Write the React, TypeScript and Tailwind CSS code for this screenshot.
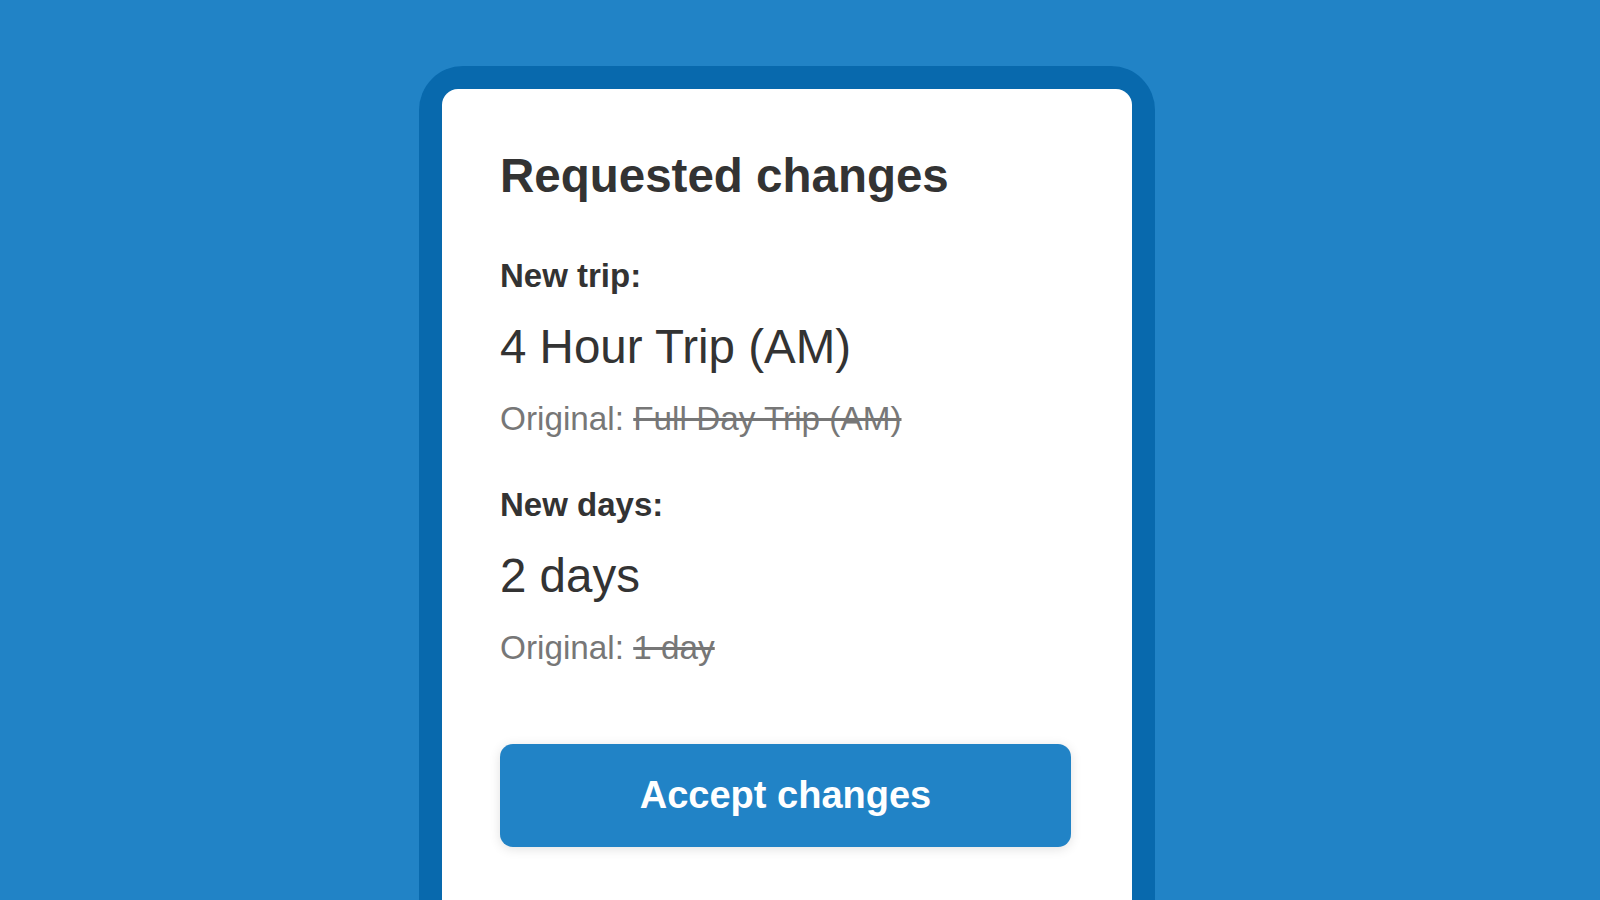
export default function App() {
  return (
    <div
      className="h-screen w-full overflow-hidden bg-[#2183c6] pl-[419px] pt-[66px]"
      style={{ fontFamily: '"Liberation Sans", Arial, sans-serif' }}
    >
      {/* Device frame */}
      <div className="w-[736px] rounded-t-[44px] bg-[#0869ad] px-[23px] pt-[23px]">
        <div className="rounded-t-[16px] bg-white pl-[58px] pr-[61px] pt-[59px] pb-[200px] text-[#333333]">
          <h1 className="text-[47.5px] font-bold leading-[56px]">Requested changes</h1>

          <p className="mt-[52px] text-[33px] font-bold leading-[40px]">New trip:</p>
          <p className="mt-[23px] text-[47.5px] leading-[56px]">4 Hour Trip (AM)</p>
          <p className="mt-[24px] text-[33.3px] leading-[40px] text-[#777777]">
            Original: <span className="line-through">Full Day Trip (AM)</span>
          </p>

          <p className="mt-[46px] text-[33px] font-bold leading-[40px]">New days:</p>
          <p className="mt-[23px] text-[47.5px] leading-[56px]">2 days</p>
          <p className="mt-[24px] text-[33.3px] leading-[40px] text-[#777777]">
            Original: <span className="line-through">1 day</span>
          </p>

          <button className="mt-[76px] flex h-[103px] w-[571px] items-center justify-center rounded-[13px] bg-[#2183c6] text-[38px] font-bold text-white shadow-[0_2px_12px_rgba(0,0,0,0.12)]">
            Accept changes
          </button>
        </div>
      </div>
    </div>
  );
}
